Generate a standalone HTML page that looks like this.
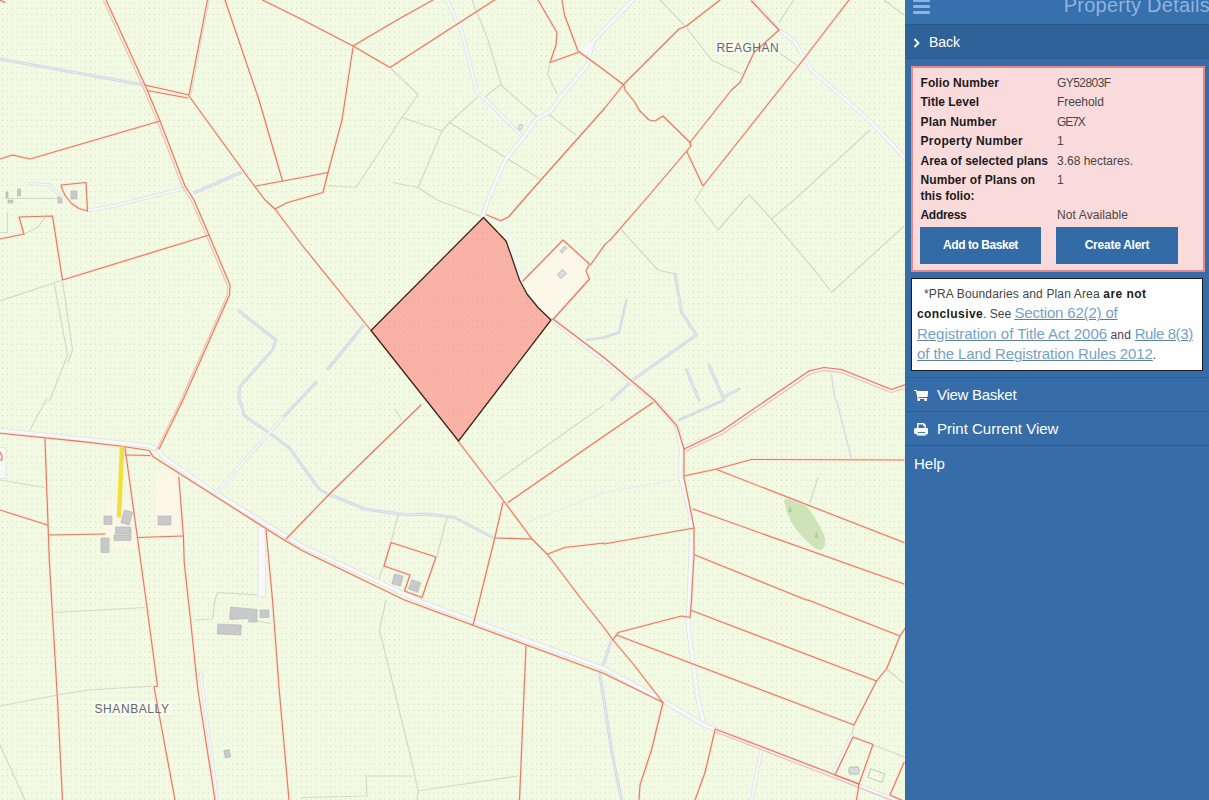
<!DOCTYPE html>
<html lang="en">
<head>
<meta charset="utf-8">
<title>Property Details</title>
<style>
*{box-sizing:border-box;margin:0;padding:0}
html,body{width:1209px;height:800px;overflow:hidden;background:#366da8;font-family:"Liberation Sans",sans-serif}
#map{position:absolute;left:0;top:0;width:905px;height:800px;overflow:hidden;background:#f3fae3}
#map svg{display:block}
#panel{position:absolute;left:905px;top:0;width:304px;height:800px;background:#366da8;color:#fff;overflow:hidden}
#hdr{position:absolute;left:0;top:0;width:304px;height:24px;background:#3670ad}
#hdr .ttl{position:absolute;right:-1px;top:-8px;font-size:20px;letter-spacing:.25px;color:#8fb3dc;white-space:nowrap;line-height:26px}
#hdr .bars{position:absolute;left:8px;top:0}
#back{position:absolute;left:0;top:24px;width:304px;height:35px;background:#2f6299;border-top:1px solid #2b5a8d;border-bottom:1px solid #2b5a8d}
#back span{position:absolute;left:24px;top:7.2px;font-size:14px;line-height:20px;color:#fff}
#back svg{position:absolute;left:8px;top:12.8px}
#info{position:absolute;left:6px;top:66.3px;width:294px;height:205.7px;background:#fadbdc;border:2px solid #e8868a;color:#222}
.row{position:absolute;margin-top:.7px;left:7px;font-size:12px;line-height:15px;white-space:nowrap}
.row b{font-weight:bold;color:#1a1a1a;position:relative;left:.5px}
.row i{font-style:normal;position:absolute;left:137px;top:0;color:#4a4545}
.btn{position:absolute;top:158.7px;width:122px;height:37px;background:#336ba6;color:#fff;font-size:12px;font-weight:bold;text-align:center;line-height:37px}
#note{position:absolute;left:6px;top:278px;width:292px;height:93px;background:#fff;border:1px solid #1a1a1a;color:#444;font-size:12px;line-height:20.4px;padding:4.9px 0 0 5px;white-space:nowrap}
#note b{color:#1c1c1c}
#note a{font-size:15px;line-height:1;color:#76a1c6;text-decoration:underline;text-decoration-color:#5f7f9c}
.mi{position:absolute;left:0;width:304px;height:34px;border-top:1px solid #2d5f95;font-size:15px;line-height:20px;color:#fff}
.mi span{position:absolute;top:7px}
.mi svg{position:absolute;left:9px}
</style>
</head>
<body>
<div id="map">
<svg id="mapsvg" width="905" height="800" viewBox="0 0 905 800">
<defs>
<pattern id="dots" width="4.9" height="5.9" patternUnits="userSpaceOnUse"><rect x="2" y="2" width="1" height="1" fill="#9aa88c" opacity="0.45"/></pattern>
<pattern id="dots2" width="4.9" height="5.9" patternUnits="userSpaceOnUse"><rect x="2" y="2" width="1" height="1" fill="#d08878" opacity="0.45"/></pattern>
</defs>
<rect width="905" height="800" fill="#f3fae3"/>
<rect width="905" height="800" fill="url(#dots)"/>
<!--MAPSTART-->
<polygon points="523,281 563,240 589.5,264 586,271 589.5,279 553,319.5 538,307.5 527,294" fill="#fbf8ea" stroke="none" stroke-width="1" stroke-linejoin="round"/>
<polygon points="107.5,500 130,500 136,547.5 115,547.5 114,535 102.5,534" fill="#fbf7e6" stroke="none" stroke-width="1" stroke-linejoin="round"/>
<polygon points="155.5,480 162.5,467.5 179,477.5 182.5,536 155.5,535" fill="#fbf7e6" stroke="none" stroke-width="1" stroke-linejoin="round"/>
<path d="M784,500 Q789,497 794,498.5 Q802,501 808,508 Q818,521 824,535 Q827,545 822,549.5 Q817,551 811,545 Q800,536 791.5,522.5 Q786,512 784,500Z" fill="#cfe3b9"/>
<path d="M790,505 l2,7 h-4z M816.5,531 l2,7 h-4z" fill="#a9cf96"/>
<polyline points="0,59 144,85" fill="none" stroke="#d0d9e4" stroke-width="3" stroke-linejoin="round" stroke-linecap="round" />
<polyline points="0,59 144,85" fill="none" stroke="#e6ecf1" stroke-width="1" stroke-linejoin="round" stroke-linecap="round" />
<polyline points="195,192.5 241,172.5" fill="none" stroke="#d0d9e4" stroke-width="3" stroke-linejoin="round" stroke-linecap="round" />
<polyline points="195,192.5 241,172.5" fill="none" stroke="#e6ecf1" stroke-width="1" stroke-linejoin="round" stroke-linecap="round" />
<polyline points="239,311 276,340 272.5,350 239.7,387 238.9,398 244.7,416.3 269.5,432.9 289.3,447.7 319,489 326,493 364.5,509 407,515 427,514 454.5,517.5 493,537.5" fill="none" stroke="#d0d9e4" stroke-width="3" stroke-linejoin="round" stroke-linecap="round" />
<polyline points="239,311 276,340 272.5,350 239.7,387 238.9,398 244.7,416.3 269.5,432.9 289.3,447.7 319,489 326,493 364.5,509 407,515 427,514 454.5,517.5 493,537.5" fill="none" stroke="#e6ecf1" stroke-width="1" stroke-linejoin="round" stroke-linecap="round" />
<polyline points="363,326 328,369" fill="none" stroke="#d0d9e4" stroke-width="3" stroke-linejoin="round" stroke-linecap="round" />
<polyline points="363,326 328,369" fill="none" stroke="#e6ecf1" stroke-width="1" stroke-linejoin="round" stroke-linecap="round" />
<polyline points="316,382.5 283,417.5" fill="none" stroke="#d0d9e4" stroke-width="3" stroke-linejoin="round" stroke-linecap="round" />
<polyline points="316,382.5 283,417.5" fill="none" stroke="#e6ecf1" stroke-width="1" stroke-linejoin="round" stroke-linecap="round" />
<polyline points="587,340 604,337.5 619,332.5 626.5,300" fill="none" stroke="#d0d9e4" stroke-width="2.5" stroke-linejoin="round" stroke-linecap="round" />
<polyline points="587,340 604,337.5 619,332.5 626.5,300" fill="none" stroke="#e6ecf1" stroke-width="0.5" stroke-linejoin="round" stroke-linecap="round" />
<polyline points="675,274 681.5,312.5 696.5,335 634,379 611.5,400" fill="none" stroke="#d0d9e4" stroke-width="3" stroke-linejoin="round" stroke-linecap="round" />
<polyline points="675,274 681.5,312.5 696.5,335 634,379 611.5,400" fill="none" stroke="#e6ecf1" stroke-width="1" stroke-linejoin="round" stroke-linecap="round" />
<polyline points="686.5,370 699,400" fill="none" stroke="#d0d9e4" stroke-width="3" stroke-linejoin="round" stroke-linecap="round" />
<polyline points="686.5,370 699,400" fill="none" stroke="#e6ecf1" stroke-width="1" stroke-linejoin="round" stroke-linecap="round" />
<polyline points="709,365 723,397.5 739,389" fill="none" stroke="#d0d9e4" stroke-width="3" stroke-linejoin="round" stroke-linecap="round" />
<polyline points="709,365 723,397.5 739,389" fill="none" stroke="#e6ecf1" stroke-width="1" stroke-linejoin="round" stroke-linecap="round" />
<polyline points="724,400 704,409 679,420" fill="none" stroke="#d0d9e4" stroke-width="2.5" stroke-linejoin="round" stroke-linecap="round" />
<polyline points="724,400 704,409 679,420" fill="none" stroke="#e6ecf1" stroke-width="0.5" stroke-linejoin="round" stroke-linecap="round" />
<polyline points="831.5,375 835,400" fill="none" stroke="#d6dfe8" stroke-width="1.5" stroke-linejoin="round" stroke-linecap="round" />
<polyline points="836.5,400 851.5,459" fill="none" stroke="#d6dfe8" stroke-width="1.5" stroke-linejoin="round" stroke-linecap="round" />
<polyline points="611.5,640 604,662.5 599.5,672.5 604,700 611.5,750 621.5,800" fill="none" stroke="#d0d9e4" stroke-width="3" stroke-linejoin="round" stroke-linecap="round" />
<polyline points="611.5,640 604,662.5 599.5,672.5 604,700 611.5,750 621.5,800" fill="none" stroke="#e6ecf1" stroke-width="1" stroke-linejoin="round" stroke-linecap="round" />
<polyline points="526,522.5 604,492.5 674,480" fill="none" stroke="#e7eef0" stroke-width="1.5" stroke-linejoin="round" stroke-linecap="round" />
<polyline points="209,0 191,94" fill="none" stroke="#d1d9cb" stroke-width="1.2" stroke-linejoin="round" stroke-linecap="round" />
<polyline points="390,67.5 418,94.5 402,117.5 356,187.5 327,185.5" fill="none" stroke="#d1d9cb" stroke-width="1.2" stroke-linejoin="round" stroke-linecap="round" />
<polyline points="402,117.5 442,131 449.5,122.5 477,97.5" fill="none" stroke="#d1d9cb" stroke-width="1.2" stroke-linejoin="round" stroke-linecap="round" />
<polyline points="442,131 418,187.5 393,182.5" fill="none" stroke="#d1d9cb" stroke-width="1.2" stroke-linejoin="round" stroke-linecap="round" />
<polyline points="418,187.5 437,200 479.5,216" fill="none" stroke="#d1d9cb" stroke-width="1.2" stroke-linejoin="round" stroke-linecap="round" />
<polyline points="449.5,122.5 540,179" fill="none" stroke="#d1d9cb" stroke-width="1.2" stroke-linejoin="round" stroke-linecap="round" />
<polyline points="472,0 488,40 501,84 486,96" fill="none" stroke="#d1d9cb" stroke-width="1.2" stroke-linejoin="round" stroke-linecap="round" />
<polyline points="501,85 536,116" fill="none" stroke="#d1d9cb" stroke-width="1.2" stroke-linejoin="round" stroke-linecap="round" />
<polyline points="549.5,115 576,135" fill="none" stroke="#d1d9cb" stroke-width="1.2" stroke-linejoin="round" stroke-linecap="round" />
<polyline points="549.5,62.5 548,75 557,94" fill="none" stroke="#d1d9cb" stroke-width="1.2" stroke-linejoin="round" stroke-linecap="round" />
<polyline points="660,0 686.5,27.5 711.5,60 741.5,74" fill="none" stroke="#d1d9cb" stroke-width="1.2" stroke-linejoin="round" stroke-linecap="round" />
<polyline points="794,0 779,22.5" fill="none" stroke="#d1d9cb" stroke-width="1.2" stroke-linejoin="round" stroke-linecap="round" />
<polyline points="779,52.5 796.5,65" fill="none" stroke="#d1d9cb" stroke-width="1.2" stroke-linejoin="round" stroke-linecap="round" />
<polyline points="870,130 794,200 771.5,219" fill="none" stroke="#d1d9cb" stroke-width="1.2" stroke-linejoin="round" stroke-linecap="round" />
<polyline points="703,187.5 695,200 718,230 744,200 749,195 754,200 771.5,219 816.5,272.5 831.5,292.5 904,226" fill="none" stroke="#d1d9cb" stroke-width="1.2" stroke-linejoin="round" stroke-linecap="round" />
<polyline points="884,0 904,15" fill="none" stroke="#d1d9cb" stroke-width="1.2" stroke-linejoin="round" stroke-linecap="round" />
<polyline points="621.5,230 658,270 675,274" fill="none" stroke="#d1d9cb" stroke-width="1.2" stroke-linejoin="round" stroke-linecap="round" />
<polyline points="0,301 62.5,280" fill="none" stroke="#d1d9cb" stroke-width="1.2" stroke-linejoin="round" stroke-linecap="round" />
<polyline points="54,282.5 67.5,355 50,400 46,400 30,430" fill="none" stroke="#d1d9cb" stroke-width="1.2" stroke-linejoin="round" stroke-linecap="round" />
<polyline points="62.5,281 72.5,350 68,362" fill="none" stroke="#d1d9cb" stroke-width="1.2" stroke-linejoin="round" stroke-linecap="round" />
<polyline points="24,234 37.5,227.5 45,217.5" fill="none" stroke="#d1d9cb" stroke-width="1.2" stroke-linejoin="round" stroke-linecap="round" />
<polyline points="0,232.5 7.5,232.5 7.5,212.5" fill="none" stroke="#d1d9cb" stroke-width="1.2" stroke-linejoin="round" stroke-linecap="round" />
<polyline points="0,480 45,487.5" fill="none" stroke="#d1d9cb" stroke-width="1.2" stroke-linejoin="round" stroke-linecap="round" />
<polyline points="604,405 494.5,482.5" fill="none" stroke="#d1d9cb" stroke-width="1.2" stroke-linejoin="round" stroke-linecap="round" />
<polyline points="398,515 391,542.5 378,582.5" fill="none" stroke="#d1d9cb" stroke-width="1.2" stroke-linejoin="round" stroke-linecap="round" />
<polyline points="447,517.5 437,556" fill="none" stroke="#d1d9cb" stroke-width="1.2" stroke-linejoin="round" stroke-linecap="round" />
<polyline points="394.5,409 402,420" fill="none" stroke="#d1d9cb" stroke-width="1.2" stroke-linejoin="round" stroke-linecap="round" />
<polyline points="818,477.5 810,502.5" fill="none" stroke="#d1d9cb" stroke-width="1.2" stroke-linejoin="round" stroke-linecap="round" />
<polyline points="54,612.5 145,607.5" fill="none" stroke="#d1d9cb" stroke-width="1.2" stroke-linejoin="round" stroke-linecap="round" />
<polyline points="0,706 57.5,695 87.5,690 155,686" fill="none" stroke="#d1d9cb" stroke-width="1.2" stroke-linejoin="round" stroke-linecap="round" />
<polyline points="0,745 25,800" fill="none" stroke="#d1d9cb" stroke-width="1.2" stroke-linejoin="round" stroke-linecap="round" />
<polyline points="215,600 212.5,619 195,620" fill="none" stroke="#d1d9cb" stroke-width="1.2" stroke-linejoin="round" stroke-linecap="round" />
<polyline points="217.5,592.5 257.5,595" fill="none" stroke="#d1d9cb" stroke-width="1.2" stroke-linejoin="round" stroke-linecap="round" />
<polyline points="217.5,592.5 215,600" fill="none" stroke="#d1d9cb" stroke-width="1.2" stroke-linejoin="round" stroke-linecap="round" />
<polyline points="386,600 379.5,630 412,762.5 418,791 518,776" fill="none" stroke="#d1d9cb" stroke-width="1.2" stroke-linejoin="round" stroke-linecap="round" />
<polyline points="418,791 417,800" fill="none" stroke="#d1d9cb" stroke-width="1.2" stroke-linejoin="round" stroke-linecap="round" />
<polyline points="412,776 366,776 367,796 302,797.5" fill="none" stroke="#d1d9cb" stroke-width="1.2" stroke-linejoin="round" stroke-linecap="round" />
<polyline points="873,745 906,757.5" fill="none" stroke="#d1d9cb" stroke-width="1.2" stroke-linejoin="round" stroke-linecap="round" />
<polyline points="886.5,669 903,682.5" fill="none" stroke="#d1d9cb" stroke-width="1.2" stroke-linejoin="round" stroke-linecap="round" />
<polyline points="854,725 851.5,736" fill="none" stroke="#d1d9cb" stroke-width="1.2" stroke-linejoin="round" stroke-linecap="round" />
<polyline points="257.5,621 270,623.5" fill="none" stroke="#d1d9cb" stroke-width="1.2" stroke-linejoin="round" stroke-linecap="round" />
<polyline points="487,218.5 507,222.5 513,245 518,270 523,282.5" fill="none" stroke="#f4f4f4" stroke-width="2.5" stroke-linejoin="round" stroke-linecap="round" />
<polyline points="447,0 462,32.5 477,92.5 486,100 522,136" fill="none" stroke="#dfe1e6" stroke-width="3.8" stroke-linejoin="round" stroke-linecap="round" />
<polyline points="447,0 462,32.5 477,92.5 486,100 522,136" fill="none" stroke="#f8f8fa" stroke-width="2.2" stroke-linejoin="round" stroke-linecap="round" />
<polyline points="482,217.5 488,200 503,165 506,159 525.9,134.4 535.8,119.6 550.7,111.3 560,98 587,65.5 593,41.4 632.8,0" fill="none" stroke="#dfe1e6" stroke-width="4.4" stroke-linejoin="round" stroke-linecap="round" />
<polyline points="482,217.5 488,200 503,165 506,159 525.9,134.4 535.8,119.6 550.7,111.3 560,98 587,65.5 593,41.4 632.8,0" fill="none" stroke="#f8f8fa" stroke-width="2.8" stroke-linejoin="round" stroke-linecap="round" />
<polygon points="580,52 594,40 590,55" fill="#f8f8fa" stroke="none" stroke-width="1" stroke-linejoin="round"/>
<polyline points="751.5,0 779,30 794,41 804,57.5 811.5,70 869,120 906,159" fill="none" stroke="#dfe1e6" stroke-width="4.3" stroke-linejoin="round" stroke-linecap="round" />
<polyline points="751.5,0 779,30 794,41 804,57.5 811.5,70 869,120 906,159" fill="none" stroke="#f8f8fa" stroke-width="2.7" stroke-linejoin="round" stroke-linecap="round" />
<polyline points="87.7,210.4 115.8,205.4 148.9,197.1 178.7,189.7 185.3,188.4" fill="none" stroke="#dfe1e6" stroke-width="3.5999999999999996" stroke-linejoin="round" stroke-linecap="round" />
<polyline points="87.7,210.4 115.8,205.4 148.9,197.1 178.7,189.7 185.3,188.4" fill="none" stroke="#f8f8fa" stroke-width="1.9999999999999998" stroke-linejoin="round" stroke-linecap="round" />
<polyline points="553,320 604,360 654,400 677,426 681.5,451 680,475 690,512.5 691.5,540 689,600 688,625 693,662.5 698,700 703,720" fill="none" stroke="#dfe1e6" stroke-width="4.8" stroke-linejoin="round" stroke-linecap="round" />
<polyline points="553,320 604,360 654,400 677,426 681.5,451 680,475 690,512.5 691.5,540 689,600 688,625 693,662.5 698,700 703,720" fill="none" stroke="#f8f8fa" stroke-width="3.2" stroke-linejoin="round" stroke-linecap="round" />
<polyline points="684,447.5 721.5,432.5 769,400 809,372.5 824,369 841.5,371 891.5,391 906,386" fill="none" stroke="#dfe1e6" stroke-width="4.3" stroke-linejoin="round" stroke-linecap="round" />
<polyline points="684,447.5 721.5,432.5 769,400 809,372.5 824,369 841.5,371 891.5,391 906,386" fill="none" stroke="#f8f8fa" stroke-width="2.7" stroke-linejoin="round" stroke-linecap="round" />
<polyline points="0,430.4 80,438.8 150,446 158,449.5 163,457 212.3,491.2 280,532.6 302,546 419.5,601 604,668.5 662,700 704,725 716.5,730 856.5,785 894,800" fill="none" stroke="#dfe1e6" stroke-width="5.0" stroke-linejoin="round" stroke-linecap="round" />
<polyline points="0,430.4 80,438.8 150,446 158,449.5 163,457 212.3,491.2 280,532.6 302,546 419.5,601 604,668.5 662,700 704,725 716.5,730 856.5,785 894,800" fill="none" stroke="#f8f8fa" stroke-width="3.4000000000000004" stroke-linejoin="round" stroke-linecap="round" />
<polyline points="283,417.5 216.5,492.4" fill="none" stroke="#dfe1e6" stroke-width="3.4000000000000004" stroke-linejoin="round" stroke-linecap="round" />
<polyline points="283,417.5 216.5,492.4" fill="none" stroke="#f8f8fa" stroke-width="1.8" stroke-linejoin="round" stroke-linecap="round" />
<rect x="258" y="527" width="7.5" height="69.5" fill="#f8f8fa" stroke="#dfe1e6" stroke-width="0.8"/>
<polyline points="761.5,750 751.5,800" fill="none" stroke="#dfe1e6" stroke-width="3.8" stroke-linejoin="round" stroke-linecap="round" />
<polyline points="761.5,750 751.5,800" fill="none" stroke="#f8f8fa" stroke-width="2.2" stroke-linejoin="round" stroke-linecap="round" />
<polyline points="851.5,736 833,774" fill="none" stroke="#dfe1e6" stroke-width="3.8" stroke-linejoin="round" stroke-linecap="round" />
<polyline points="851.5,736 833,774" fill="none" stroke="#f8f8fa" stroke-width="2.2" stroke-linejoin="round" stroke-linecap="round" />
<polyline points="200.5,673 217.5,800" fill="none" stroke="#dfe1e6" stroke-width="3.3" stroke-linejoin="round" stroke-linecap="round" />
<polyline points="200.5,673 217.5,800" fill="none" stroke="#f8f8fa" stroke-width="1.7" stroke-linejoin="round" stroke-linecap="round" />
<rect x="-1" y="447.5" width="7" height="31" fill="#f8f8f6" stroke="#e1e3e4" stroke-width="0.8"/>
<rect x="714.5" y="41.5" width="66" height="13" rx="3" fill="#f8fcf0" opacity="0.85"/><rect x="92.5" y="702" width="80" height="13" rx="3" fill="#f8fcf0" opacity="0.85"/>
<g fill="none" stroke="#fbe6d4" stroke-width="3" stroke-linejoin="round" stroke-linecap="round" opacity="0.7"><polyline points="106,0 145,85 160,121 185,186 194,200 209,235 230,285 229.5,295 183,400 159,449"/><polyline points="207.5,0 189,95"/><polyline points="225,0 259,100 282.5,181"/><polyline points="262.5,0 302,19.5 353,46 390,67.5 494.5,0"/><polyline points="145,85 189,95"/><polyline points="147.5,90.5 187.5,98"/><polyline points="189,96 250,180 265,200 275,209 302,245 371,330.5"/><polyline points="275,209 287.5,202.5 323,192.5 328,172.5 342,120 353,47.5"/><polyline points="0,159 12.5,155 30,159 160,121"/><polyline points="256,186 302,177.5 328,172.5"/><polyline points="61,185 86,182.5 87.5,211 79,208.5 71.5,203.5 65.5,196 62.5,190 61,185"/><polyline points="0,0 5,2.5"/><polyline points="353,46 397,20 433,0"/><polyline points="604,109 531.5,190.5 508.5,217 500.6,220.8 486.5,214.8"/><polyline points="538,0 557,32.5 556,45 550,62.5 578,52.5"/><polyline points="562,0 564.5,15 578,51 604,70 624,85 625,90 635,102.5 639,110 649,120 655,121 663,116 690,142.5 691,146 645,200 610.6,239.6 604.8,244.6 590.5,265"/><polyline points="720,0 686.5,26 679,29 624,84 604,109"/><polyline points="690,142.5 731.5,90 740,82.5 754,52.5 779,30 751.5,1"/><polyline points="686.5,151 703,186 803,60 849,0"/><polyline points="0,239 24,234 19,217 52.5,216 62.5,280 209,235"/><polyline points="523,281 563,240 589.5,264 586,271 589.5,279 553,319.5"/><polyline points="553,319 604,357.5 654,400 677,426 684,449"/><polyline points="684,449 721.5,431 769,398.5 809,371 824,367.5 841.5,369.5 891.5,389.5 906,384.5"/><polyline points="653,402.5 604,436 508,502.5"/><polyline points="684,449 684,477.5 694,527.5 694,555 691.5,600 690,617.5"/><polyline points="684,476 716.5,469 751.5,459.5 904,460"/><polyline points="716.5,469.5 904,542.5"/><polyline points="693,509 904,584"/><polyline points="695,555 806.5,600 808,600 900,636 906,627"/><polyline points="604,544 694,528"/><polyline points="0,433.2 80,441.4 121.4,446.2 149.5,450.5 152.8,456.5 280,537.5 302,550.5 404.5,600 604,673.5 663,702.5"/><polyline points="715,729 859,784"/><polyline points="45,439 49.3,560 57.5,700 62.5,800"/><polyline points="0,510 47.5,525"/><polyline points="50,535 105,534"/><polyline points="137.5,537.5 182.5,536"/><polyline points="125,447.5 135,520 146,600 157.5,686 154,687 175,800"/><polyline points="125,455 150,455.5"/><polyline points="178.8,477 183.4,536 184.2,562 190.5,620 196.3,675 198.2,692 215,800"/><polyline points="266,530 272.5,600 279,687.5 289,800"/><polyline points="302,522.5 286,539"/><polyline points="421,405 331,492.5 302,522.5"/><polyline points="458,441 503,500 532,539 548,555 582,600 604,627.5 613,640 634,665 663,702.5 651.5,750 640,785 639,800"/><polyline points="503,502.5 494.5,539 479.5,600 473,625"/><polyline points="494.5,538 532,539"/><polyline points="548,554 564.5,547.5 604,543"/><polyline points="391,542.5 436,557 422,597.5 404.5,591 410,575 384,566 391,542.5"/><polyline points="526,646 519.5,800"/><polyline points="613,640 618,632.5 681.5,616 690,617.5"/><polyline points="691.5,610.5 876.5,681 854,725 616.5,635"/><polyline points="900,636 886.5,669 876.5,681"/><polyline points="715,730 705,772.5 695,800"/><polyline points="853,737 873,744.5 859,784 835,775 853,737"/><polyline points="859,784 856.5,800"/><polyline points="904,762.5 890,795 901.5,800"/><polyline points="0,452 2,456 2,460 0,460"/></g>
<polyline points="106,0 145,85 160,121 185,186 194,200 209,235 230,285 229.5,295 183,400 159,449" fill="none" stroke="#e07c62" stroke-width="1.15" stroke-linejoin="round" stroke-linecap="round" />
<polyline points="103.5,1 142.5,86 157.5,122 182.5,187 191.5,201 206.5,236 227.5,286 227,296 180.5,401 156.5,450" fill="none" stroke="#f1bdb6" stroke-width="1.1" stroke-linejoin="round" stroke-linecap="round" />
<polyline points="207.5,0 189,95" fill="none" stroke="#e07c62" stroke-width="1.15" stroke-linejoin="round" stroke-linecap="round" />
<polyline points="225,0 259,100 282.5,181" fill="none" stroke="#e07c62" stroke-width="1.15" stroke-linejoin="round" stroke-linecap="round" />
<polyline points="262.5,0 302,19.5 353,46 390,67.5 494.5,0" fill="none" stroke="#e07c62" stroke-width="1.15" stroke-linejoin="round" stroke-linecap="round" />
<polyline points="145,85 189,95" fill="none" stroke="#e07c62" stroke-width="1.15" stroke-linejoin="round" stroke-linecap="round" />
<polyline points="147.5,90.5 187.5,98" fill="none" stroke="#e07c62" stroke-width="1.15" stroke-linejoin="round" stroke-linecap="round" />
<polyline points="189,96 250,180 265,200 275,209 302,245 371,330.5" fill="none" stroke="#e07c62" stroke-width="1.15" stroke-linejoin="round" stroke-linecap="round" />
<polyline points="275,209 287.5,202.5 323,192.5 328,172.5 342,120 353,47.5" fill="none" stroke="#e07c62" stroke-width="1.15" stroke-linejoin="round" stroke-linecap="round" />
<polyline points="0,159 12.5,155 30,159 160,121" fill="none" stroke="#e07c62" stroke-width="1.15" stroke-linejoin="round" stroke-linecap="round" />
<polyline points="256,186 302,177.5 328,172.5" fill="none" stroke="#e07c62" stroke-width="1.15" stroke-linejoin="round" stroke-linecap="round" />
<polyline points="61,185 86,182.5 87.5,211 79,208.5 71.5,203.5 65.5,196 62.5,190 61,185" fill="none" stroke="#e07c62" stroke-width="1.15" stroke-linejoin="round" stroke-linecap="round" />
<polyline points="0,0 5,2.5" fill="none" stroke="#e07c62" stroke-width="1.15" stroke-linejoin="round" stroke-linecap="round" />
<polyline points="353,46 397,20 433,0" fill="none" stroke="#e07c62" stroke-width="1.15" stroke-linejoin="round" stroke-linecap="round" />
<polyline points="604,109 531.5,190.5 508.5,217 500.6,220.8 486.5,214.8" fill="none" stroke="#e07c62" stroke-width="1.15" stroke-linejoin="round" stroke-linecap="round" />
<polyline points="538,0 557,32.5 556,45 550,62.5 578,52.5" fill="none" stroke="#e07c62" stroke-width="1.15" stroke-linejoin="round" stroke-linecap="round" />
<polyline points="562,0 564.5,15 578,51 604,70 624,85 625,90 635,102.5 639,110 649,120 655,121 663,116 690,142.5 691,146 645,200 610.6,239.6 604.8,244.6 590.5,265" fill="none" stroke="#e07c62" stroke-width="1.15" stroke-linejoin="round" stroke-linecap="round" />
<polyline points="720,0 686.5,26 679,29 624,84 604,109" fill="none" stroke="#e07c62" stroke-width="1.15" stroke-linejoin="round" stroke-linecap="round" />
<polyline points="690,142.5 731.5,90 740,82.5 754,52.5 779,30 751.5,1" fill="none" stroke="#e07c62" stroke-width="1.15" stroke-linejoin="round" stroke-linecap="round" />
<polyline points="686.5,151 703,186 803,60 849,0" fill="none" stroke="#e07c62" stroke-width="1.15" stroke-linejoin="round" stroke-linecap="round" />
<polyline points="0,239 24,234 19,217 52.5,216 62.5,280 209,235" fill="none" stroke="#e07c62" stroke-width="1.15" stroke-linejoin="round" stroke-linecap="round" />
<polyline points="523,281 563,240 589.5,264 586,271 589.5,279 553,319.5" fill="none" stroke="#e07c62" stroke-width="1.15" stroke-linejoin="round" stroke-linecap="round" />
<polyline points="553,319 604,357.5 654,400 677,426 684,449" fill="none" stroke="#e07c62" stroke-width="1.15" stroke-linejoin="round" stroke-linecap="round" />
<polyline points="684,449 721.5,431 769,398.5 809,371 824,367.5 841.5,369.5 891.5,389.5 906,384.5" fill="none" stroke="#e07c62" stroke-width="1.15" stroke-linejoin="round" stroke-linecap="round" />
<polyline points="686,451 722.5,434 770,401.5 810,374 824,370.5 841,372.5 891,392.5 906,388" fill="none" stroke="#f1bdb6" stroke-width="1.1" stroke-linejoin="round" stroke-linecap="round" />
<polyline points="653,402.5 604,436 508,502.5" fill="none" stroke="#e07c62" stroke-width="1.15" stroke-linejoin="round" stroke-linecap="round" />
<polyline points="684,449 684,477.5 694,527.5 694,555 691.5,600 690,617.5" fill="none" stroke="#e07c62" stroke-width="1.15" stroke-linejoin="round" stroke-linecap="round" />
<polyline points="684,476 716.5,469 751.5,459.5 904,460" fill="none" stroke="#e07c62" stroke-width="1.15" stroke-linejoin="round" stroke-linecap="round" />
<polyline points="716.5,469.5 904,542.5" fill="none" stroke="#e07c62" stroke-width="1.15" stroke-linejoin="round" stroke-linecap="round" />
<polyline points="693,509 904,584" fill="none" stroke="#e07c62" stroke-width="1.15" stroke-linejoin="round" stroke-linecap="round" />
<polyline points="695,555 806.5,600 808,600 900,636 906,627" fill="none" stroke="#e07c62" stroke-width="1.15" stroke-linejoin="round" stroke-linecap="round" />
<polyline points="604,544 694,528" fill="none" stroke="#e07c62" stroke-width="1.15" stroke-linejoin="round" stroke-linecap="round" />
<polyline points="0,433.2 80,441.4 121.4,446.2 149.5,450.5 152.8,456.5 280,537.5 302,550.5 404.5,600 604,673.5 663,702.5" fill="none" stroke="#e07c62" stroke-width="1.15" stroke-linejoin="round" stroke-linecap="round" />
<polyline points="715,729 859,784" fill="none" stroke="#e07c62" stroke-width="1.15" stroke-linejoin="round" stroke-linecap="round" />
<polyline points="716,732 858,787 894,801" fill="none" stroke="#f1bdb6" stroke-width="1.1" stroke-linejoin="round" stroke-linecap="round" />
<polyline points="45,439 49.3,560 57.5,700 62.5,800" fill="none" stroke="#e07c62" stroke-width="1.15" stroke-linejoin="round" stroke-linecap="round" />
<polyline points="0,510 47.5,525" fill="none" stroke="#e07c62" stroke-width="1.15" stroke-linejoin="round" stroke-linecap="round" />
<polyline points="50,535 105,534" fill="none" stroke="#e07c62" stroke-width="1.15" stroke-linejoin="round" stroke-linecap="round" />
<polyline points="137.5,537.5 182.5,536" fill="none" stroke="#e07c62" stroke-width="1.15" stroke-linejoin="round" stroke-linecap="round" />
<polyline points="125,447.5 135,520 146,600 157.5,686 154,687 175,800" fill="none" stroke="#e07c62" stroke-width="1.15" stroke-linejoin="round" stroke-linecap="round" />
<polyline points="125,455 150,455.5" fill="none" stroke="#e07c62" stroke-width="1.15" stroke-linejoin="round" stroke-linecap="round" />
<polyline points="178.8,477 183.4,536 184.2,562 190.5,620 196.3,675 198.2,692 215,800" fill="none" stroke="#e07c62" stroke-width="1.15" stroke-linejoin="round" stroke-linecap="round" />
<polyline points="266,530 272.5,600 279,687.5 289,800" fill="none" stroke="#e07c62" stroke-width="1.15" stroke-linejoin="round" stroke-linecap="round" />
<polyline points="302,522.5 286,539" fill="none" stroke="#e07c62" stroke-width="1.15" stroke-linejoin="round" stroke-linecap="round" />
<polyline points="421,405 331,492.5 302,522.5" fill="none" stroke="#e07c62" stroke-width="1.15" stroke-linejoin="round" stroke-linecap="round" />
<polyline points="458,441 503,500 532,539 548,555 582,600 604,627.5 613,640 634,665 663,702.5 651.5,750 640,785 639,800" fill="none" stroke="#e07c62" stroke-width="1.15" stroke-linejoin="round" stroke-linecap="round" />
<polyline points="503,502.5 494.5,539 479.5,600 473,625" fill="none" stroke="#e07c62" stroke-width="1.15" stroke-linejoin="round" stroke-linecap="round" />
<polyline points="494.5,538 532,539" fill="none" stroke="#e07c62" stroke-width="1.15" stroke-linejoin="round" stroke-linecap="round" />
<polyline points="548,554 564.5,547.5 604,543" fill="none" stroke="#e07c62" stroke-width="1.15" stroke-linejoin="round" stroke-linecap="round" />
<polyline points="391,542.5 436,557 422,597.5 404.5,591 410,575 384,566 391,542.5" fill="none" stroke="#e07c62" stroke-width="1.15" stroke-linejoin="round" stroke-linecap="round" />
<polyline points="526,646 519.5,800" fill="none" stroke="#e07c62" stroke-width="1.15" stroke-linejoin="round" stroke-linecap="round" />
<polyline points="613,640 618,632.5 681.5,616 690,617.5" fill="none" stroke="#e07c62" stroke-width="1.15" stroke-linejoin="round" stroke-linecap="round" />
<polyline points="691.5,610.5 876.5,681 854,725 616.5,635" fill="none" stroke="#e07c62" stroke-width="1.15" stroke-linejoin="round" stroke-linecap="round" />
<polyline points="900,636 886.5,669 876.5,681" fill="none" stroke="#e07c62" stroke-width="1.15" stroke-linejoin="round" stroke-linecap="round" />
<polyline points="715,730 705,772.5 695,800" fill="none" stroke="#e07c62" stroke-width="1.15" stroke-linejoin="round" stroke-linecap="round" />
<polyline points="853,737 873,744.5 859,784 835,775 853,737" fill="none" stroke="#e07c62" stroke-width="1.15" stroke-linejoin="round" stroke-linecap="round" />
<polyline points="859,784 856.5,800" fill="none" stroke="#e07c62" stroke-width="1.15" stroke-linejoin="round" stroke-linecap="round" />
<polyline points="904,762.5 890,795 901.5,800" fill="none" stroke="#e07c62" stroke-width="1.15" stroke-linejoin="round" stroke-linecap="round" />
<polyline points="0,452 2,456 2,460 0,460" fill="none" stroke="#e07c62" stroke-width="1.15" stroke-linejoin="round" stroke-linecap="round" />
<line x1="122" y1="446.5" x2="119" y2="517.5" stroke="#f3df3c" stroke-width="4.5"/>
<rect x="104" y="516" width="8" height="8.5" fill="#c9c9cb" stroke="#b3b3b3" stroke-width="0.6" transform="rotate(0 108 520.25)"/>
<rect x="122.5" y="511" width="8.5" height="13" fill="#c9c9cb" stroke="#b3b3b3" stroke-width="0.6" transform="rotate(15 126.75 517.5)"/>
<rect x="115.5" y="527" width="15.5" height="7" fill="#c9c9cb" stroke="#b3b3b3" stroke-width="0.6" transform="rotate(0 123.25 530.5)"/>
<rect x="114" y="535" width="17" height="5.5" fill="#c9c9cb" stroke="#b3b3b3" stroke-width="0.6" transform="rotate(0 122.5 537.75)"/>
<rect x="101" y="538" width="8" height="14.5" fill="#c9c9cb" stroke="#b3b3b3" stroke-width="0.6" transform="rotate(0 105 545.25)"/>
<rect x="158" y="516" width="13" height="9" fill="#c9c9cb" stroke="#b3b3b3" stroke-width="0.6" transform="rotate(0 164.5 520.5)"/>
<polygon points="230.5,607 257,609.5 257,622 248.7,622 248.7,618.7 229.6,619.5" fill="#c9c9cb" stroke="#b3b3b3" stroke-width="0.6" stroke-linejoin="round"/>
<rect x="260" y="610" width="9" height="7.5" fill="#c9c9cb" stroke="#b3b3b3" stroke-width="0.6" transform="rotate(0 264.5 613.75)"/>
<rect x="217.5" y="624.5" width="23.5" height="10" fill="#c9c9cb" stroke="#b3b3b3" stroke-width="0.6" transform="rotate(3 229.25 629.5)"/>
<rect x="224.5" y="750" width="5.5" height="7.5" fill="#c9c9cb" stroke="#b3b3b3" stroke-width="0.6" transform="rotate(-10 227.25 753.75)"/>
<rect x="393" y="575" width="9" height="10" fill="#c9c9cb" stroke="#b3b3b3" stroke-width="0.6" transform="rotate(15 397.5 580)"/>
<rect x="410" y="581" width="9.5" height="10" fill="#c9c9cb" stroke="#b3b3b3" stroke-width="0.6" transform="rotate(20 414.75 586)"/>
<rect x="558" y="271.5" width="7.5" height="5.5" fill="#dcdcdc" stroke="#b8b8b8" stroke-width="0.8" transform="rotate(-40 561.5 274)"/>
<rect x="560" y="248" width="7" height="3" fill="#dcdcdc" stroke="#b8b8b8" stroke-width="0.8" transform="rotate(-45 563.5 249.5)"/>
<rect x="849" y="767" width="10" height="7" rx="1.5" fill="#d9dbd9" stroke="#a9b0ad" stroke-width="0.8"/>
<rect x="869" y="771" width="15" height="9" fill="none" stroke="#c4c8c4" stroke-width="1" transform="rotate(20 876 775)"/>
<rect x="519" y="124.5" width="3" height="5.5" fill="#e4e6e2" stroke="#b5b8b5" stroke-width="0.7" transform="rotate(25 520.5 127)"/>
<rect x="6" y="192" width="2" height="6" fill="#c9c9cb" stroke="#b3b3b3" stroke-width="0.6" transform="rotate(0 7 195)"/>
<rect x="17.5" y="189" width="3" height="7" fill="#c9c9cb" stroke="#b3b3b3" stroke-width="0.6" transform="rotate(0 19 192.5)"/>
<rect x="8" y="200" width="5" height="3" fill="#c9c9cb" stroke="#b3b3b3" stroke-width="0.6" transform="rotate(0 10.5 201.5)"/>
<rect x="58" y="197" width="4" height="6" fill="#c9c9cb" stroke="#b3b3b3" stroke-width="0.6" transform="rotate(0 60 200)"/>
<rect x="71" y="191" width="6" height="8" fill="#c9c9cb" stroke="#b3b3b3" stroke-width="0.6" transform="rotate(0 74 195)"/>
<polyline points="29.7,183.4 49.5,185 61,196" fill="none" stroke="#dfe1e6" stroke-width="3.3" stroke-linejoin="round" stroke-linecap="round" />
<polyline points="29.7,183.4 49.5,185 61,196" fill="none" stroke="#f8f8fa" stroke-width="1.7" stroke-linejoin="round" stroke-linecap="round" />
<polyline points="6,198.5 57,198.5" fill="none" stroke="#d1d9cb" stroke-width="1.2" stroke-linejoin="round" stroke-linecap="round" />
<polygon points="483.5,217.5 506,241 511,255 519.5,280 527,294 538,307.5 551,320 458.5,441 371,330.5" fill="#f9b3a6" stroke="#3d1f1c" stroke-width="1.25" stroke-linejoin="round"/>
<polygon points="483.5,217.5 506,241 511,255 519.5,280 527,294 538,307.5 551,320 458.5,441 371,330.5" fill="url(#dots2)" stroke="none" stroke-width="1" stroke-linejoin="round"/>
<text x="716.5" y="52.3" font-family="Liberation Sans, sans-serif" font-size="12" letter-spacing="0.45" fill="#69666f">REAGHAN</text>
<text x="94.5" y="712.8" font-family="Liberation Sans, sans-serif" font-size="12" letter-spacing="0.58" fill="#69666f">SHANBALLY</text>
<!--MAPEND-->
</svg>
</div>
<div id="panel">
  <div id="hdr">
    <svg class="bars" width="18" height="14" viewBox="0 0 18 14"><rect x="0" y="-1" width="17" height="3" rx="1" fill="#8fb3dc"/><rect x="0" y="5" width="17" height="3" rx="1" fill="#8fb3dc"/><rect x="0" y="11" width="17" height="3" rx="1" fill="#8fb3dc"/></svg>
    <div class="ttl">Property Details</div>
  </div>
  <div id="back">
    <svg width="8" height="10" viewBox="0 0 8 10"><path d="M1.5 1 L5.5 5 L1.5 9" fill="none" stroke="#fff" stroke-width="1.8"/></svg>
    <span>Back</span>
  </div>
  <div id="info">
    <div class="row" style="top:6.75px"><b style="letter-spacing:.1px">Folio Number</b><i style="letter-spacing:-.55px">GY52803F</i></div>
    <div class="row" style="top:26.25px"><b>Title Level</b><i style="letter-spacing:-.08px">Freehold</i></div>
    <div class="row" style="top:45.75px"><b style="letter-spacing:.2px">Plan Number</b><i style="letter-spacing:-1.1px">GE7X</i></div>
    <div class="row" style="top:65.25px"><b style="letter-spacing:.3px">Property Number</b><i>1</i></div>
    <div class="row" style="top:84.75px"><b>Area of selected plans</b><i>3.68 hectares.</i></div>
    <div class="row" style="top:104.25px"><b style="letter-spacing:.08px">Number of Plans on</b><i>1</i></div>
    <div class="row" style="top:119.85px"><b>this folio:</b></div>
    <div class="row" style="top:139.45px"><b style="letter-spacing:-.3px">Address</b><i style="letter-spacing:.1px">Not Available</i></div>
    <div class="btn" style="left:6.75px;width:121.5px;letter-spacing:-.45px">Add to Basket</div>
    <div class="btn" style="left:143px;letter-spacing:-.25px">Create Alert</div>
  </div>
  <div id="note"><span style="letter-spacing:.15px">&nbsp;&nbsp;*PRA Boundaries and Plan Area </span><b style="letter-spacing:.45px">are not</b><br><b style="letter-spacing:.4px">conclusive</b>. See <a style="letter-spacing:-.17px">Section 62(2) of</a><br><a style="letter-spacing:-.03px">Registration of Title Act 2006</a> <span style="letter-spacing:.3px">and</span> <a style="letter-spacing:-.4px">Rule 8(3)</a><br><a style="letter-spacing:-.1px">of the Land Registration Rules 2012</a>.</div>
  <div class="mi" style="top:377px"><svg width="14.5" height="11.6" viewBox="0 0 14.5 11.6" style="left:8.75px;top:11.6px"><path d="M0 0H2.7L3.2 1.1H14.5L13.5 6.9H4.4L4.7 7.9H13V9H3.7L2 1.1H0Z" fill="#fff"/><rect x="3.4" y="8.6" width="2.5" height="3" rx="1" fill="#fff"/><rect x="10.3" y="8.6" width="2.6" height="3" rx="1" fill="#fff"/></svg><span style="left:32px;letter-spacing:-.27px">View Basket</span></div>
  <div class="mi" style="top:411px"><svg width="14.8" height="12.6" viewBox="0 0 14.8 12.6" style="left:8.5px;top:11.2px"><path d="M3.1 0H9.8L11.9 2V5.6H3.1Z M4.5 1.5V5H10.5V2.9H9V1.5Z" fill="#fff" fill-rule="evenodd"/><rect x="0" y="4.9" width="14.8" height="6.3" rx="1.9" fill="#fff"/><rect x="3.1" y="8.2" width="8.8" height="4.4" fill="#fff"/><rect x="3.9" y="9.1" width="7.2" height="1" fill="#356da8"/></svg><span style="left:32px">Print Current View</span></div>
  <div class="mi" style="top:445px"><span style="left:9px;top:7.5px">Help</span></div>
</div>
</body>
</html>
